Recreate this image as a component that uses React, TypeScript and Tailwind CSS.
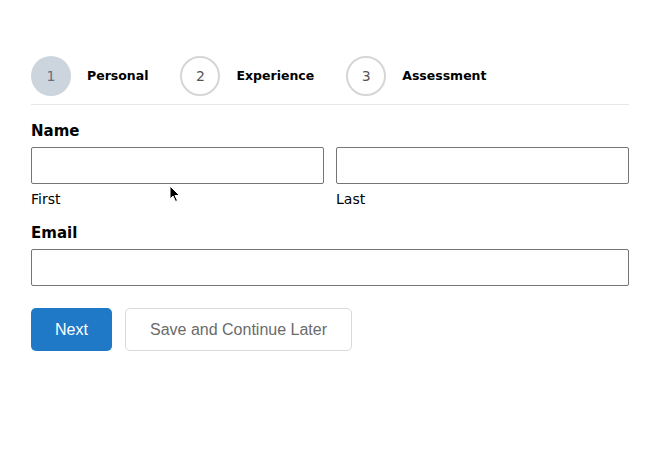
import React from 'react';

const STEPS = [
  { n: 1, label: 'Personal', active: true },
  { n: 2, label: 'Experience', active: false },
  { n: 3, label: 'Assessment', active: false },
];

const FONT = { fontFamily: '"DejaVu Sans", "Liberation Sans", sans-serif' };

function Cursor() {
  return (
    <svg className="absolute left-[169px] top-[185px]" width="12" height="18" viewBox="0 0 12 18">
      <path d="M1 1 L1 14 L4 11 L6.5 16.5 L8.5 15.5 L6 10.5 L10.5 10.5 Z" fill="#000" stroke="#fff" strokeWidth="1" />
    </svg>
  );
}

export default function App() {
  return (
    <div className="relative w-[660px] h-[450px] bg-white text-black" style={FONT}>
      <div className="px-[31px] pt-[56px]">
        {/* Steps */}
        <div className="flex items-center gap-[32px] pb-[8px] border-b border-[#e6e6e6]">
          {STEPS.map((s) => (
            <div key={s.n} className="flex items-center gap-[16px]">
              <div
                className={`w-[40px] h-[40px] rounded-full flex items-center justify-center text-[14px] ${
                  s.active ? 'bg-[#ccd5dd] text-[#6b7079]' : 'border-2 border-[#d6d6d6] text-[#555]'
                }`}
              >
                {s.n}
              </div>
              <span className="text-[12.5px] font-bold">{s.label}</span>
            </div>
          ))}
        </div>

        {/* Name */}
        <div className="mt-[16px] text-[15px] font-bold leading-[20px]">Name</div>
        <div className="mt-[6px] grid grid-cols-2 gap-[12px]">
          <div>
            <div className="h-[37px] border border-[#757575] rounded-[2px]" />
            <div className="mt-[5px] text-[14px] leading-[20px]">First</div>
          </div>
          <div>
            <div className="h-[37px] border border-[#757575] rounded-[2px]" />
            <div className="mt-[5px] text-[14px] leading-[20px]">Last</div>
          </div>
        </div>

        {/* Email */}
        <div className="mt-[14px] text-[15px] font-bold leading-[20px]">Email</div>
        <div className="mt-[6px] h-[37px] border border-[#757575] rounded-[2px]" />

        {/* Buttons */}
        <div className="mt-[22px] flex gap-[13px]" style={{ fontFamily: '"Liberation Sans", Arial, sans-serif' }}>
          <button className="w-[81px] h-[43px] rounded-[5px] bg-[#2079c7] text-white text-[16px]">Next</button>
          <button className="w-[227px] h-[43px] rounded-[5px] border border-[#d9d9d9] bg-white text-[#6b6b6b] text-[16px]">
            Save and Continue Later
          </button>
        </div>
      </div>
      <Cursor />
    </div>
  );
}
